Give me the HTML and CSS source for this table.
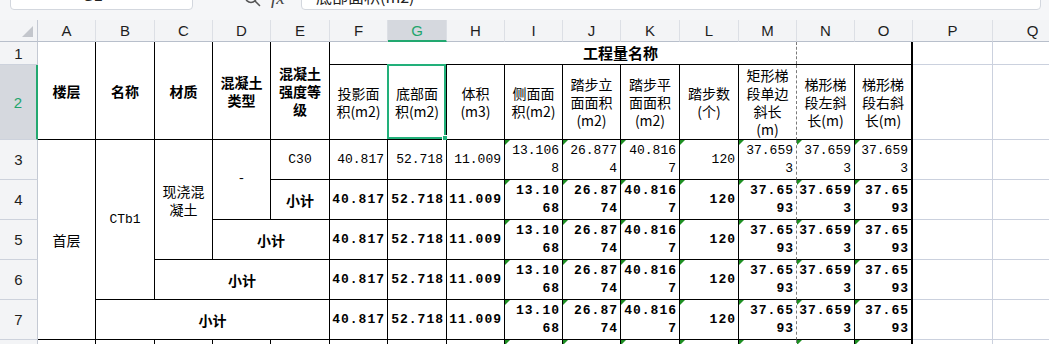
FILE: index.html
```html
<!DOCTYPE html>
<html lang="zh-CN">
<head>
<meta charset="utf-8">
<title>工程量</title>
<link rel="stylesheet" href="styles.css">
</head>
<body>
<div class="app">
  <div class="toolbar">
    <div class="namebox">G2</div>
    <svg class="search" width="20" height="20" viewBox="0 0 20 20"><circle cx="8" cy="7" r="5.5" fill="none" stroke="#555" stroke-width="1.5"/><line x1="12" y1="11" x2="16.5" y2="15.5" stroke="#555" stroke-width="1.6" stroke-linecap="round"/></svg>
    <span class="fx">fx</span>
    <div class="formula">底部面积(m2)</div>
  </div>

  <div class="sheet">
    <!-- column headers -->
    <div class="ch corner"><span class="all"></span></div>
    <div class="ch">A</div><div class="ch">B</div><div class="ch">C</div><div class="ch">D</div><div class="ch">E</div>
    <div class="ch">F</div><div class="ch sel-c">G</div><div class="ch">H</div><div class="ch">I</div><div class="ch">J</div>
    <div class="ch">K</div><div class="ch">L</div><div class="ch">M</div><div class="ch">N</div><div class="ch">O</div>
    <div class="ch">P</div><div class="ch">Q</div>

    <!-- row 1 -->
    <div class="rh">1</div>
    <div class="c hd r2">楼层</div>
    <div class="c hd r2">名称</div>
    <div class="c hd r2">材质</div>
    <div class="c hd r2">混凝土<br>类型</div>
    <div class="c hd r2">混凝土<br>强度等<br>级</div>
    <div class="c title"><span>工程量名称</span><i class="pb"></i></div>
    <div class="e"></div><div class="e"></div>

    <!-- row 2 -->
    <div class="rh sel-r">2</div>
    <div class="c">投影面<br>积(m2)</div>
    <div class="c sel">底部面<br>积(m2)<i class="box"></i></div>
    <div class="c">体积<br>(m3)</div>
    <div class="c">侧面面<br>积(m2)</div>
    <div class="c">踏步立<br>面面积<br>(m2)</div>
    <div class="c">踏步平<br>面面积<br>(m2)</div>
    <div class="c">踏步数<br>(个)</div>
    <div class="c dash">矩形梯<br>段单边<br>斜长<br>(m)</div>
    <div class="c">梯形梯<br>段左斜<br>长(m)</div>
    <div class="c last">梯形梯<br>段右斜<br>长(m)</div>
    <div class="e"></div><div class="e"></div>

    <!-- row 3 -->
    <div class="rh">3</div>
    <div class="c r5">首层</div>
    <div class="c r4 mono">CTb1</div>
    <div class="c r3">现浇混<br>凝土</div>
    <div class="c r2 mono dashsym">-</div>
    <div class="c mono">C30</div>
    <div class="c num">40.817</div>
    <div class="c num">52.718</div>
    <div class="c num">11.009</div>
    <div class="c num t">13.106<br>8</div>
    <div class="c num t">26.877<br>4</div>
    <div class="c num t">40.816<br>7</div>
    <div class="c num t">120</div>
    <div class="c num t dash">37.659<br>3</div>
    <div class="c num t">37.659<br>3</div>
    <div class="c num t last">37.659<br>3</div>
    <div class="e"></div><div class="e"></div>

    <!-- row 4 -->
    <div class="rh">4</div>
    <div class="c hd">小计</div>
    <div class="c num b">40.817</div>
    <div class="c num b">52.718</div>
    <div class="c num b">11.009</div>
    <div class="c num b t">13.10<br>68</div>
    <div class="c num b t">26.87<br>74</div>
    <div class="c num b t">40.816<br>7</div>
    <div class="c num b t">120</div>
    <div class="c num b t dash">37.65<br>93</div>
    <div class="c num b t">37.659<br>3</div>
    <div class="c num b t last">37.65<br>93</div>
    <div class="e"></div><div class="e"></div>

    <!-- row 5 -->
    <div class="rh">5</div>
    <div class="c hd s2">小计</div>
    <div class="c num b">40.817</div>
    <div class="c num b">52.718</div>
    <div class="c num b">11.009</div>
    <div class="c num b t">13.10<br>68</div>
    <div class="c num b t">26.87<br>74</div>
    <div class="c num b t">40.816<br>7</div>
    <div class="c num b t">120</div>
    <div class="c num b t dash">37.65<br>93</div>
    <div class="c num b t">37.659<br>3</div>
    <div class="c num b t last">37.65<br>93</div>
    <div class="e"></div><div class="e"></div>

    <!-- row 6 -->
    <div class="rh">6</div>
    <div class="c hd s3">小计</div>
    <div class="c num b">40.817</div>
    <div class="c num b">52.718</div>
    <div class="c num b">11.009</div>
    <div class="c num b t">13.10<br>68</div>
    <div class="c num b t">26.87<br>74</div>
    <div class="c num b t">40.816<br>7</div>
    <div class="c num b t">120</div>
    <div class="c num b t dash">37.65<br>93</div>
    <div class="c num b t">37.659<br>3</div>
    <div class="c num b t last">37.65<br>93</div>
    <div class="e"></div><div class="e"></div>

    <!-- row 7 -->
    <div class="rh">7</div>
    <div class="c hd s4">小计</div>
    <div class="c num b">40.817</div>
    <div class="c num b">52.718</div>
    <div class="c num b">11.009</div>
    <div class="c num b t">13.10<br>68</div>
    <div class="c num b t">26.87<br>74</div>
    <div class="c num b t">40.816<br>7</div>
    <div class="c num b t">120</div>
    <div class="c num b t dash">37.65<br>93</div>
    <div class="c num b t">37.659<br>3</div>
    <div class="c num b t last">37.65<br>93</div>
    <div class="e"></div><div class="e"></div>

    <!-- row 8 -->
    <div class="rh">8</div>
    <div class="c"></div><div class="c"></div><div class="c"></div><div class="c"></div><div class="c"></div>
    <div class="c"></div><div class="c"></div><div class="c"></div>
    <div class="c t"></div><div class="c t"></div><div class="c t"></div><div class="c t"></div>
    <div class="c t dash"></div><div class="c t"></div><div class="c t last"></div>
    <div class="e"></div><div class="e"></div>
  </div>
</div>
</body>
</html>
```

FILE: styles.css
```css
html, body {
  margin: 0;
  padding: 0;
  overflow: hidden;
  background: #ffffff;
}

body {
  width: 1049px;
  height: 344px;
  font-family: "Noto Sans CJK SC", "Noto Sans", sans-serif;
  color: #000;
}

.app {
  background: #f5f6f8;
}

/* ---------- toolbar (mostly scrolled off the top) ---------- */
.toolbar {
  display: flex;
  align-items: flex-start;
  height: 30px;
  margin-top: -20px;
  margin-bottom: 10px;
}

.namebox {
  box-sizing: border-box;
  margin-top: 2px;
  margin-left: 10px;
  width: 183px;
  height: 28px;
  padding-right: 18px;
  border: 1px solid #d3d7de;
  border-radius: 4px;
  background: #fff;
  font-family: "Liberation Sans", sans-serif;
  font-size: 15px;
  line-height: 26px;
  text-align: center;
  color: #222;
}

.search {
  margin-left: 50px;
  margin-top: 10px;
}

.fx {
  width: 22px;
  margin-left: 8px;
  margin-top: 8px;
  font-family: "Liberation Serif", serif;
  font-style: italic;
  font-size: 19px;
  line-height: 20px;
  color: #444;
}

.formula {
  box-sizing: border-box;
  flex: 1;
  margin-top: 2px;
  margin-left: 8px;
  margin-right: 8px;
  height: 28px;
  padding-left: 14px;
  border: 1px solid #d3d7de;
  border-radius: 4px;
  background: #fff;
  font-size: 16px;
  line-height: 26px;
  color: #222;
}

/* ---------- sheet grid ---------- */
.sheet {
  display: grid;
  grid-template-columns: 38px 58px 59px 58px 58px 59px 58px 59px 58px 58px 58px 59px 59px 58px 58px 58px 80px 80px;
  grid-template-rows: 22px 23px 75px repeat(6, 40px);
  background: #fff;
}

.ch {
  box-sizing: border-box;
  display: flex;
  align-items: center;
  justify-content: center;
  background: #f3f4f6;
  border-right: 1px solid #dcdfe5;
  border-bottom: 1px solid #b8bfcb;
  font-family: "Liberation Sans", sans-serif;
  font-size: 15px;
  color: #1e1e1e;
}

.corner {
  position: relative;
  border-right-color: #c4c9d3;
}

.all {
  position: absolute;
  right: 4px;
  bottom: 4px;
  width: 0;
  height: 0;
  border-left: 11px solid transparent;
  border-bottom: 11px solid #c3c6cc;
}

.sel-c {
  background: #d5d8de;
  border-bottom: 2px solid #22a870;
  color: #1fa56c;
}

.rh {
  grid-column: 1;
  box-sizing: border-box;
  display: flex;
  align-items: center;
  justify-content: center;
  background: #f3f4f6;
  border-right: 1px solid #c4c9d3;
  border-bottom: 1px solid #cdd2dc;
  font-family: "Liberation Sans", sans-serif;
  font-size: 15px;
  color: #1e1e1e;
}

.sel-r {
  background: #d5d8de;
  border-right: 2px solid #22a870;
  color: #1fa56c;
}

.c {
  position: relative;
  box-sizing: border-box;
  display: flex;
  align-items: center;
  justify-content: center;
  text-align: center;
  border-right: 1px solid #000;
  border-bottom: 1px solid #000;
  background: #fff;
  font-size: 14px;
  line-height: 18px;
}

.hd {
  font-weight: bold;
}

.r2 { grid-row: span 2; }
.r3 { grid-row: span 3; }
.r4 { grid-row: span 4; }
.r5 { grid-row: span 5; }
.s2 { grid-column: span 2; }
.s3 { grid-column: span 3; }
.s4 { grid-column: span 4; }

.title {
  grid-column: span 10;
  border-right: 2px solid #000;
  font-weight: bold;
  font-size: 15px;
}

.pb {
  position: absolute;
  left: 466px;
  top: 0;
  bottom: 0;
  border-left: 1px dashed #7a7a7a;
}

.dash {
  border-right: 1px dashed #7a7a7a;
}

.last {
  border-right: 2px solid #000;
}

.e {
  box-sizing: border-box;
  border-right: 1px solid #cbd1de;
  border-bottom: 1px solid #cbd1de;
  background: #fff;
}

.mono {
  font-family: "Liberation Mono", monospace;
  font-size: 13px;
}

.dashsym {
  padding-bottom: 1px;
}

.num {
  justify-content: flex-end;
  text-align: right;
  padding-right: 3px;
  font-family: "Liberation Mono", monospace;
  font-size: 13px;
  line-height: 18px;
}

.num.b {
  font-weight: bold;
  letter-spacing: 1px;
  padding-right: 2px;
}

.t::before {
  content: "";
  position: absolute;
  left: 0;
  top: 0;
  width: 0;
  height: 0;
  border-top: 5px solid #1d8f22;
  border-right: 5px solid transparent;
}

.box {
  position: absolute;
  left: -1px;
  top: -1px;
  right: 0;
  bottom: 0;
  border: 2px solid #22b07a;
}

.box::after {
  content: "";
  position: absolute;
  right: -5px;
  bottom: -5px;
  width: 5px;
  height: 5px;
  background: #22b07a;
  border: 1px solid #fff;
}
```
